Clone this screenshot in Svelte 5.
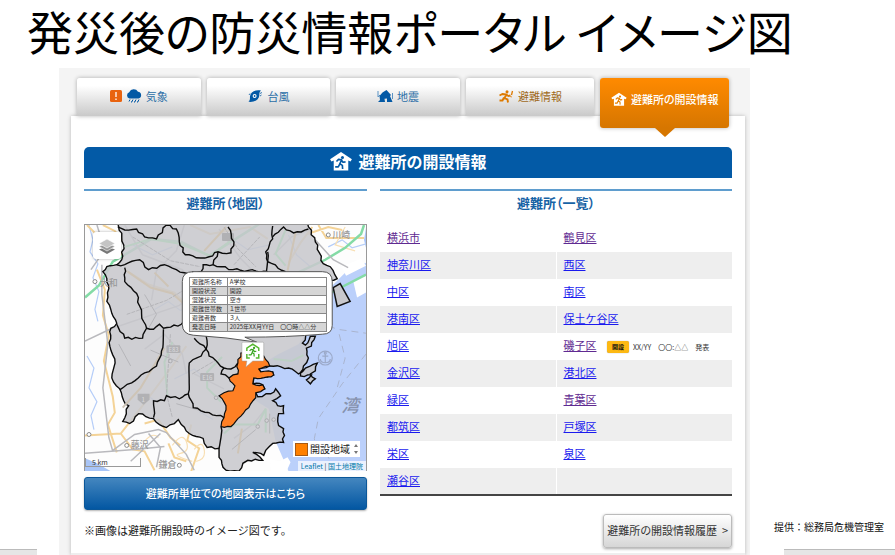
<script lang="ts">
	type Point = [number, number];

	const tabs = [
		{ id: 'weather', label: '気象' },
		{ id: 'typhoon', label: '台風' },
		{ id: 'quake', label: '地震' },
		{ id: 'evacuation', label: '避難情報' },
		{ id: 'shelter', label: '避難所の開設情報' }
	];
	let activeTab = $state('shelter');

	const wards = [
		[{ name: '横浜市', visited: true }, { name: '鶴見区', visited: true }],
		[{ name: '神奈川区' }, { name: '西区' }],
		[{ name: '中区' }, { name: '南区' }],
		[{ name: '港南区' }, { name: '保土ケ谷区' }],
		[{ name: '旭区' }, { name: '磯子区', visited: true, open: 'XX/YY　〇〇:△△　発表' }],
		[{ name: '金沢区' }, { name: '港北区' }],
		[{ name: '緑区' }, { name: '青葉区', visited: true }],
		[{ name: '都筑区' }, { name: '戸塚区' }],
		[{ name: '栄区' }, { name: '泉区' }],
		[{ name: '瀬谷区' }, null]
	];

	const details = [
		['避難所名称', 'A学校'],
		['開設状況', '開設'],
		['混雑状況', '空き'],
		['避難世帯数', '１世帯'],
		['避難者数', '３人'],
		['発表日時', '2025年XX月YY日　〇〇時△△分']
	];

	// outline of the whole city
	const city: Point[] = [
		[33, -2], [37, 12], [39, 20], [37, 35], [32, 40], [22, 42], [18, 47], [22, 54], [24, 64], [22, 77],
		[27, 89], [32, 99], [26, 104], [25, 122], [30, 135], [27, 154], [35, 165], [39, 177], [44, 182],
		[38, 198], [45, 200], [54, 190], [69, 195], [75, 201], [82, 204], [90, 200], [94, 196], [97, 201],
		[105, 210], [112, 213], [119, 215], [123, 224], [135, 225], [135, 234], [139, 244], [146, 248],
		[155, 248], [159, 240], [164, 237], [179, 237], [169, 229], [177, 230], [180, 232], [182, 227],
		[189, 220], [200, 219], [200, 205], [195, 202], [195, 190], [200, 190], [200, 182], [194, 182],
		[189, 177], [197, 172], [192, 165], [187, 170], [174, 173], [172, 169], [181, 165], [179, 161],
		[169, 160], [170, 154], [184, 153], [190, 151], [189, 148], [177, 148], [175, 145], [186, 142],
		[205, 144], [215, 150], [222, 144], [234, 139], [232, 147], [227, 150], [232, 155], [227, 160],
		[223, 156], [228, 151], [217, 152], [220, 142], [225, 134], [223, 124], [228, 122], [232, 112],
		[227, 112], [222, 121], [219, 119], [225, 108], [236, 92], [241, 84], [243, 56], [254, 54],
		[247, 42], [240, 39], [232, 17], [224, -2]
	];

	const openWard: Point[] = [
		[157, 129], [165, 126], [180, 132], [186, 142], [175, 145], [177, 148], [189, 148], [190, 151], [184, 153],
		[170, 154], [169, 160], [179, 161], [181, 165], [172, 169], [172, 174], [165, 184], [154, 195],
		[147, 203], [137, 203], [140, 194], [142, 182], [135, 172], [140, 169], [149, 167], [151, 162],
		[145, 154], [154, 150], [154, 139]
	];

	const borders: Point[][] = [
		[[33, 2], [40, 5], [52, 4], [60, 12], [72, 14], [82, 0], [92, 4], [95, 17], [101, 30], [112, 33], [125, 32], [134, 27], [147, 28], [150, 17], [144, 2]],
		[[134, 27], [129, 40], [119, 40], [117, 47], [104, 49], [92, 45], [80, 40], [64, 45], [55, 35], [40, 40], [32, 40]],
		[[40, 43], [40, 57], [52, 69], [57, 90], [62, 104], [58, 114], [40, 114], [32, 100]],
		[[62, 104], [69, 105], [75, 100], [79, 104], [97, 100], [104, 95]],
		[[79, 105], [77, 127], [72, 142], [60, 149], [47, 159], [35, 166]],
		[[69, 194], [69, 177], [80, 177], [82, 172], [95, 175], [104, 170], [105, 139], [117, 132], [122, 125], [122, 112]],
		[[104, 170], [109, 184], [125, 189], [140, 194]],
		[[122, 125], [125, 132], [134, 139], [140, 144], [147, 145], [154, 139]],
		[[129, 40], [149, 45], [184, 47]],
		[[189, 1], [189, 14], [182, 27], [184, 37], [202, 47]],
		[[184, 27], [182, 50]],
		[[189, 12], [200, 2], [210, 8], [225, 4]],
		[[137, 203], [135, 225]],
		[[110, 114], [122, 125]],
		[[154, 150], [145, 154], [137, 150], [140, 144]]
	];

	// Breaks straight runs into short wobbly steps, so borders read as surveyed lines
	function rough(points: Point[], closed = false) {
		const path: string[] = [];
		const last = closed ? points.length : points.length - 1;
		for (let i = 0; i < last; i++) {
			const [x1, y1] = points[i];
			const [x2, y2] = points[(i + 1) % points.length];
			const length = Math.hypot(x2 - x1, y2 - y1);
			const steps = Math.max(1, Math.round(length / 4));
			for (let s = 0; s < steps; s++) {
				const t = s / steps;
				const x = x1 + (x2 - x1) * t;
				const y = y1 + (y2 - y1) * t;
				const wobble = s === 0 ? 0 : Math.sin(x * 12.9 + y * 78.2) * 1.1;
				path.push(`${(x + (wobble * (y1 - y2)) / length).toFixed(1)} ${(y + (wobble * (x2 - x1)) / length).toFixed(1)}`);
			}
		}
		if (!closed) path.push(points[points.length - 1].join(' '));
		return 'M' + path.join('L') + (closed ? 'Z' : '');
	}
</script>

{#snippet runner()}
	<circle cx="13.6" cy="7.2" r="1.7" fill="currentColor" />
	<path
		d="M7 11.5l2.3-2.3 3.4.6-2 4.2 2.8 1.8.3 4M10.6 14.5l-1.6 3H5.6M12.6 10.2l1.6 2.2 2.8-.4"
		fill="none"
		stroke="currentColor"
		stroke-width="1.8"
		stroke-linejoin="round"
	/>
{/snippet}

{#snippet shelterIcon()}
	<svg class="shelter-icon" viewBox="0 0 24 22" aria-hidden="true">
		<path d="M12 1L0 9l1.5 2.500L4 10.500V21.500h16V10.500l2.500 1L24 9z" fill="#fff" />
		<g class="cutout">{@render runner()}</g>
	</svg>
{/snippet}

{#snippet tabIcon(id: string)}
	{#if id === 'weather'}
		<svg class="alert-icon" viewBox="0 0 12 12" aria-hidden="true">
			<rect width="12" height="12" rx="1.500" fill="#e9630f" />
			<path d="M6 2v5M6 8.500v1.500" stroke="#fff" stroke-width="1.300" />
		</svg>
		<svg viewBox="0 0 16 14" aria-hidden="true">
			<path d="M3.500 9.500a3.300 3.300 0 0 1-.3-6.300A5 5 0 0 1 12 2.800a3.400 3.400 0 0 1 .5 6.700z" fill="#0359a5" />
			<path d="M4 10.500l-1 2M7 10.500l-1 2M10 10.500l-1 2M13 10.500l-1 2M6 12l-.5 1.500M9 12l-.5 1.500M12 12l-.5 1.500" stroke="#0359a5" stroke-width="1" />
		</svg>
	{:else if id === 'typhoon'}
		<svg viewBox="0 0 16 14" aria-hidden="true">
			<path d="M14 1.500C8.500.3 3.500 2.800 3 7.200 2.800 9.500 3.500 10.500 1.500 12.800c6 .7 10.300-2 10.800-6C12.500 4.500 12 3.300 14 1.500z" fill="#0359a5" />
			<path d="M15 3.500l-2 1M14.500 6L13 7M3 4.500L2 6" stroke="#0359a5" stroke-width=".8" />
			<circle cx="7.600" cy="7" r="2" fill="#fff" />
			<circle cx="7.600" cy="7" r=".9" fill="#0359a5" />
		</svg>
	{:else if id === 'quake'}
		<svg viewBox="0 0 16 14" aria-hidden="true">
			<path d="M1 2v6l2-2M15.500 4v6" fill="none" stroke="#5b93c4" />
			<path d="M2.500 7l3-3.500 4-2.500 4.500 5-1 1 2.500 6H10V9.500l-2.500.3.5 3.200H1l2-2z" fill="#0359a5" />
		</svg>
	{:else if id === 'evacuation'}
		<svg viewBox="0 0 16 14" aria-hidden="true">
			<circle cx="9" cy="2.800" r="1.500" fill="#dd7a00" />
			<path d="M1.500 6.500l3-1.500 4 .5-2 3.500 3 1.500.5 3M6 8.500l-1.500 3H1.500M8.500 6l2 1 2-.5" fill="none" stroke="#dd7a00" stroke-width="1.900" />
			<path d="M14.500 2l-1 4M13.200 7.200l-.3 1" stroke="#dd7a00" stroke-width="1.300" />
		</svg>
	{:else}
		{@render shelterIcon()}
	{/if}
{/snippet}

<div class="page">
	<h1>発災後の防災情報ポータル イメージ図</h1>

	<div class="stage">
		<div class="gutter"><div class="bar left"></div></div>

		<main>
			<nav class="tabs">
				{#each tabs as tab}
					<button
						class={['tab', tab.id, activeTab === tab.id && 'active']}
						onclick={() => (activeTab = tab.id)}
					>
						{@render tabIcon(tab.id)}
						<span>{tab.label}</span>
					</button>
				{/each}
			</nav>

			<div class="card">
				<h2>{@render shelterIcon()}避難所の開設情報</h2>

				<div class="columns">
					<section>
						<h3>避難所（地図）</h3>
						<div class="map">
							<svg viewBox="0 0 283 248" role="img" aria-label="横浜市の地図">
								<rect width="283" height="248" fill="#fdfdfd" />
								<path d="M283 38L262 48 246 64 233 95 215 120 195 130 170 145 160 170 185 185 192 218 205 248H283z" fill="#bbd0fb" />
								<path d="M0 235l12 5 14 8H0zM283 3l-2 12 2 8z" fill="#a9c5f7" />
								<path d="M258 42l20-8 5 7-20 10zM270 56l13-5v17l-9 5zM186 236l10 2 8-4 3 5-4 9h-16z" fill="#fff" />

								<g fill="none" stroke="#b5cdf8" stroke-width="1.200">
									<path d="M4 0l4 15-3 12 8 12-5 14 6 14-4 18 3 12M2 132l7 12-5 20 8 14-6 14 3 14M70 85l14-8 12 9 16-4M48 20l20 10 20-8M125 60l20 12M90 155l20-10 14 12M60 170l12 8" />
									<path d="M150 15l14 10 22-5M205 10l8 20 14 12M245 22l14-7 10 8 14-4M115 188l14 8" />
								</g>
								<g fill="none" stroke="#f4d397" stroke-width="2">
									<path d="M2 0l17 17 12 1 8 16M18 0l12 6 8 10M12 45l8 20-2 26 6 20-5 26 9 36 2 16-7 12 9 28" />
									<path d="M40 45l24 15 26 8 22 22M0 212l36-2 22-28 30-40 14-20M36 210l12 16 12 2 10 19M235 0l8 13h38M224 9l21-7 14 3M107 248l8-23-12-8 4-16" />
									<path d="M60 200l14-4 12 18 10 8M106 0l20 9 40-7 18 12M205 38l12-20 12-16M84 220l6 14 12 4" />
								</g>
								<g fill="none" stroke="#f8dfb4" stroke-width="1.200">
									<path d="M88 222q10-14 14-4t-6 12 12 8M110 226q8-10 10 0t-8 12M60 218q8-10 14-4M20 8l14 22M262 2l-10 18 20 6" />
								</g>
								<g fill="none" stroke="#84dba6" stroke-width="2.500">
									<path d="M0 73l14-12 14-24 17-10 22-13 30 3 28 14 30-19 22-14M248 68l35-18M210 50l32-15 20-12 16-14 3-9" />
								</g>
								<g fill="none" stroke="#b9b9bd" stroke-width="1.500">
									<path d="M0 117l25-12 70-24 15-11M17 40v30l6 50-5 44 6 50 4 14M28 227l22-16 24-5 8 3 20 22 8 16M76 210l-30 28M0 230l50-4 30-3M12 0l8 25-14 20M40 0l18 30 40 15 14 16M135 4l22 30 12 12M190 30l18-18 20-8M232 15l18 20 15 8" />
									<path d="M100 0l-8 26-20 20-5 30M60 125l20-15 18 20 4 20M110 150l30 15M150 215l20-15 12-15M64 210l12 14-4 20" />
								</g>

								<path d={rough(city, true)} fill="#c8c8cc" fill-opacity=".87" stroke="#0c0c0c" stroke-width="1.400" />
								<path d="M250 63l7-4 10 18-13 5z" fill="#c8c8cc" stroke="#111" stroke-width="1.500" />

								<!-- expressways that stay faintly visible under the city fill -->
								<g fill="none" stroke="#bccfc4" stroke-width="2">
									<path d="M40 22l26-8 30 5 30 12 22-16M138 133l-15 15v16l14 14M88 118l-8 20 3 34M140 210l10-9h24l8-16v24M202 5l-10 24 10 12M190 135l18 2 12-6" />
								</g>
								<g fill="none" stroke="#cec4b6" stroke-width="2">
									<path d="M43 47l23 16 22 6 22 20M80 124l-24 40-18 20M84 62L70 48M212 8l-8 38M120 26l22-24M158 205l-4 25" />
								</g>
								<g fill="none" stroke="#b4b4b8">
									<path d="M42 90l40-14 17-10M140 2l14 22 18 18M86 110l-4 60 6 24M48 12l38 24 30 6M150 40l26-28M108 150l24-14" stroke-dasharray="4 1" />
									<path d="M60 70l12 20-8 14M66 126l28 12M92 180l28 8M148 226l24-20M186 190v20M34 120l12 22" />
								</g>
								<g fill="#b1b1b4">
									<rect x="82" y="121" width="14" height="8" rx="1" />
									<rect x="116" y="149" width="14" height="8" rx="1" />
									<path d="M53 170h12v6l-6 5-6-5z" />
									<rect x="138" y="8" width="12" height="8" rx="1" />
								</g>
								<g fill="#d5d5d8" class="sign">
									<text x="84" y="128">E83</text>
									<text x="118" y="156">E16</text>
									<text x="57" y="178">1</text>
								</g>
								<g fill="#d2d2d5" stroke="#aaaaae">
									<circle cx="86" cy="137" r="1.800" />
									<circle cx="132" cy="174" r="1.800" />
									<circle cx="183" cy="197" r="1.800" />
									<circle cx="190" cy="196" r="1.800" />
									<circle cx="174" cy="203" r="1.800" />
								</g>

								{#each borders as border}
									<path d={rough(border)} fill="none" stroke="#0c0c0c" stroke-width="1.400" />
								{/each}
								<path d={rough(openWard, true)} fill="#ff8024" stroke="#0c0c0c" stroke-width="1.200" />

								<g fill="none" stroke="#a9b4cf" stroke-dasharray="7 5">
									<path d="M283 130l-24 30-24 35-4 20 2 15M256 110l6 24-8 30M234 97l20 8 29 4M236 219l12 20" />
								</g>
								<g fill="none" stroke="#9ba9c9" stroke-width="1.200">
									<circle cx="242" cy="134" r="7" />
									<path d="M242 130v9M239 132h6M237 135c0 5 10 5 10 0" />
									<circle cx="242" cy="129" r="1" />
								</g>
								<g fill="#fff" stroke="#888">
									<circle cx="10" cy="57" r="2" />
									<circle cx="42" cy="222" r="2" />
									<circle cx="95" cy="242" r="2" />
									<circle cx="4" cy="211" r="2" />
									<circle cx="245" cy="10" r="2" />
								</g>
								<g class="place">
									<text x="15" y="61">大和</text>
									<text x="46" y="225">藤沢</text>
									<text x="74" y="245">鎌倉</text>
									<text x="249" y="13">川崎</text>
									<text class="bay" x="258" y="188">湾</text>
								</g>

								<path
									d="M108 47H239q10 0 10 10v44q0 9-10 9-35 3-78 3l12 5q-30-5-64-7-11-1-11-11V57q0-10 11-10z"
									fill="#fff"
									stroke="#555"
								/>
								<path d="M159 118h20q1 0 1 1v17q0 1-1 1h-10l-7 6 1-6h-4q-1 0-1-1v-17q0-1 1-1z" fill="#fff" stroke="#999" stroke-width=".5" />
								<g fill="none" stroke="#56b830" stroke-width="1.500">
									<path d="M163 127v-3l6-4 6 4v3M163 130v4h3M175 130v4h-3" />
								</g>
								<g class="pin" transform="translate(161 119) scale(.68)">{@render runner()}</g>
							</svg>

							<table class="details">
								<tbody>
									{#each details as [label, value]}
										<tr>
											<th scope="row">{label}</th>
											<td>{value}</td>
										</tr>
									{/each}
								</tbody>
							</table>

							<button class="layers" aria-label="レイヤー">
								<svg viewBox="0 0 18 18" aria-hidden="true">
									<path d="M1 12.500l8 4.500 8-4.500-8-3z" fill="#777" />
									<path d="M1 9.500L9 14l8-4.500-8-4z" fill="#999" stroke="#fff" stroke-width=".6" />
									<path d="M1 6.500L9 11l8-4.500L9 2z" fill="#c4c4c4" stroke="#fff" stroke-width=".6" />
								</svg>
							</button>
							<div class="scale">5 km</div>
							<div class="corner">
								<div class="legend">
									<i></i>開設地域
									<svg viewBox="0 0 6 12" aria-hidden="true"><path d="M1 4l2-3 2 3zM1 8l2 3 2-3z" fill="#777" /></svg>
								</div>
								<div class="credit"><a href="#leaflet">Leaflet</a> | <a href="#gsi">国土地理院</a></div>
							</div>
						</div>
						<button class="map-link">避難所単位での地図表示はこちら</button>
						<p class="note">※画像は避難所開設時のイメージ図です。</p>
					</section>

					<section>
						<h3>避難所（一覧）</h3>
						<table class="wards">
							<tbody>
								{#each wards as row}
									<tr>
										{#each row as ward}
											<td>
												{#if ward}
													<a href="#{ward.name}" class:visited={ward.visited}>{ward.name}</a>
													{#if ward.open}
														<span class="badge">開設</span><span class="time">{ward.open}</span>
													{/if}
												{/if}
											</td>
										{/each}
									</tr>
								{/each}
							</tbody>
						</table>
						<button class="history">避難所の開設情報履歴 &nbsp;&gt;</button>
					</section>
				</div>
			</div>
		</main>

		<aside class="gutter">
			<p>提供：総務局危機管理室</p>
			<div class="bar"></div>
		</aside>
	</div>
</div>

<style>
	:global(body) {
		background: #fff;
	}

	.page {
		font-family: 'Noto Sans CJK JP', 'Noto Sans', sans-serif;
		font-size: 11px;
		line-height: 16px;
		color: #333;
		font-feature-settings: 'palt';
	}

	h1,
	h2,
	h3,
	p {
		margin: 0;
	}

	h1 {
		padding: 0 0 8px 27px;
		font-size: 46px;
		line-height: 60px;
		font-weight: 400;
		color: #000;
		white-space: nowrap;
	}

	button {
		font: inherit;
		font-feature-settings: inherit;
		cursor: pointer;
	}

	.stage {
		display: grid;
		grid-template-columns: 59px 1fr 145px;
	}

	.gutter {
		display: flex;
		flex-direction: column;
		justify-content: flex-end;
	}

	.gutter p {
		padding: 0 0 14px 24px;
		font-size: 10px;
		font-feature-settings: normal;
		white-space: nowrap;
		color: #111;
	}

	.bar {
		height: 5px;
		margin-left: 34px;
		background: #e6e6e6;
		border-top: 1px solid #bbb;
	}

	.bar.left {
		margin: 0 22px 0 0;
	}

	main {
		padding: 10px 5px 0 12px;
		background: #f4f4f4;
	}

	.tabs {
		display: grid;
		grid-template-columns: repeat(3, 124fr) repeat(2, 129fr);
		grid-template-rows: 38px;
		align-items: start;
		gap: 6px;
		padding: 0 16px 0 6px;
	}

	.tab {
		display: flex;
		align-items: center;
		justify-content: center;
		gap: 4px;
		height: 38px;
		padding: 0 0 2px;
		border: 0;
		border-radius: 3px 3px 0 0;
		background: linear-gradient(#fff 20%, #c9c9c9);
		box-shadow: 0 0 4px rgba(0, 0, 0, 0.3);
		color: #2a6ea6;
		white-space: nowrap;
	}

	.tab svg {
		width: 16px;
		height: 14px;
	}

	.tab .alert-icon {
		width: 12px;
		height: 12px;
	}

	.tab.evacuation {
		color: #a06a1c;
	}

	/* the open tab hangs over the card and points into it */
	.tab.active {
		position: relative;
		z-index: 1;
		height: 50px;
		padding-bottom: 8px;
		border-radius: 3px;
		background: linear-gradient(#ff8a00, #d67600);
		color: #fff;
		font-weight: 500;
	}

	.tab.active::after {
		content: '';
		position: absolute;
		top: 100%;
		left: 50%;
		margin-left: -10px;
		border: 10px solid transparent;
		border-top: 9px solid #d67600;
		border-bottom: 0;
	}

	.cutout {
		color: #0359a5;
	}

	.tab .cutout {
		color: #e58000;
	}

	.card {
		padding: 31px 13px 5px;
		background: #fff;
		border-bottom: 2px solid #eee;
		box-shadow: 0 0 4px rgba(0, 0, 0, 0.25);
	}

	h2 {
		display: flex;
		align-items: center;
		justify-content: center;
		gap: 7px;
		box-sizing: border-box;
		height: 31px;
		padding-bottom: 3px;
		border-radius: 5px 5px 0 0;
		background: #035aa6;
		color: #fff;
		font-size: 16px;
		font-weight: 700;
	}

	h2 svg {
		width: 22px;
		height: 20px;
	}

	.columns {
		display: grid;
		grid-template-columns: 283fr 352fr;
		gap: 13px;
		margin-top: 11px;
	}

	section {
		display: flex;
		flex-direction: column;
		min-width: 0;
	}

	h3 {
		padding: 2px 0 11px;
		border-top: 2px solid #5f9dce;
		color: #1763a5;
		font-size: 13px;
		line-height: 20px;
		font-weight: 700;
		text-align: center;
	}

	.map {
		position: relative;
		border: 1px solid #999;
		border-bottom: 0;
	}

	.map > svg {
		display: block;
		width: 100%;
	}

	.map text {
		font-weight: 500;
	}

	.place text {
		font-size: 9px;
		fill: #999;
	}

	.place .bay {
		font-size: 18px;
		font-style: italic;
		fill: #8793ae;
	}

	.sign text {
		font-size: 6px;
	}

	.pin {
		color: #35a51c;
	}

	.details {
		position: absolute;
		top: 21%;
		left: 37%;
		width: 49%;
		border-collapse: collapse;
		font-size: 6px;
		line-height: 8px;
	}

	.details th,
	.details td {
		padding: 0 2px;
		border: 1px solid #888;
		font-weight: 400;
		text-align: left;
		white-space: nowrap;
	}

	.details tr:nth-child(even) {
		background: #d6d6d6;
	}

	.layers {
		position: absolute;
		top: 7px;
		left: 8px;
		width: 28px;
		height: 27px;
		padding: 5px;
		border: 0;
		border-radius: 3px;
		background: #fff;
		box-shadow: 0 0 3px rgba(0, 0, 0, 0.3);
	}

	.layers svg {
		display: block;
	}

	.scale {
		position: absolute;
		bottom: 4px;
		left: 0;
		width: 48px;
		padding-left: 6px;
		border: 1px solid #999;
		border-top: 0;
		font-size: 7px;
		line-height: 8px;
	}

	.corner {
		position: absolute;
		right: 0;
		bottom: 0;
		display: flex;
		flex-direction: column;
		align-items: flex-end;
		gap: 4px;
	}

	.legend {
		display: flex;
		align-items: center;
		gap: 2px;
		margin-right: 6px;
		padding: 1px 0 1px 2px;
		background: #fff;
		font-size: 10px;
		line-height: 14px;
		color: #222;
	}

	.legend i {
		width: 11px;
		height: 11px;
		background: #ff8000;
		border: 1px solid #a65a14;
	}

	.legend svg {
		width: 6px;
		height: 12px;
		margin: 0 1px;
	}

	.credit {
		padding: 0 3px;
		background: rgba(255, 255, 255, 0.7);
		font-size: 7px;
		line-height: 10px;
	}

	.credit a {
		color: #0078a8;
		text-decoration: none;
	}

	.map-link {
		height: 33px;
		margin-top: 6px;
		padding: 0 0 2px;
		border: 1px solid #0b5799;
		border-radius: 3px;
		background: linear-gradient(#4486bf, #0357a2);
		box-shadow: 0 1px 2px rgba(0, 0, 0, 0.3);
		color: #fff;
		font-weight: 500;
	}

	.note {
		margin-top: 12px;
		font-feature-settings: normal;
		color: #222;
	}

	.wards {
		width: 100%;
		margin-top: 1px;
		table-layout: fixed;
		border-collapse: collapse;
		border-bottom: 2px solid #444;
		font-feature-settings: normal;
	}

	.wards td {
		box-sizing: border-box;
		height: 27px;
		padding: 0 7px 3px;
		border-left: 1px solid #fff;
		white-space: nowrap;
	}

	.wards td:first-child {
		border-left: 0;
	}

	.wards tr:nth-child(even) {
		background: #eee;
	}

	.wards a {
		color: #1a1aee;
	}

	.wards a.visited {
		color: #5f2a91;
	}

	.badge {
		display: inline-block;
		margin: 0 4px 0 8px;
		padding: 0 5px;
		border-radius: 2px;
		background: #fdb913;
		box-shadow: 0 0 1px #888;
		color: #111;
		font-size: 6px;
		line-height: 12px;
		font-weight: 700;
		vertical-align: middle;
	}

	.time {
		font-size: 7px;
		line-height: 12px;
		vertical-align: middle;
	}

	.history {
		align-self: flex-end;
		height: 34px;
		margin-top: 18px;
		padding: 0 3px 2px;
		border: 1px solid #bbb;
		border-radius: 3px;
		background: linear-gradient(#fff, #d6d6d6);
		box-shadow: 0 1px 3px rgba(0, 0, 0, 0.35);
		color: #333;
	}
</style>
